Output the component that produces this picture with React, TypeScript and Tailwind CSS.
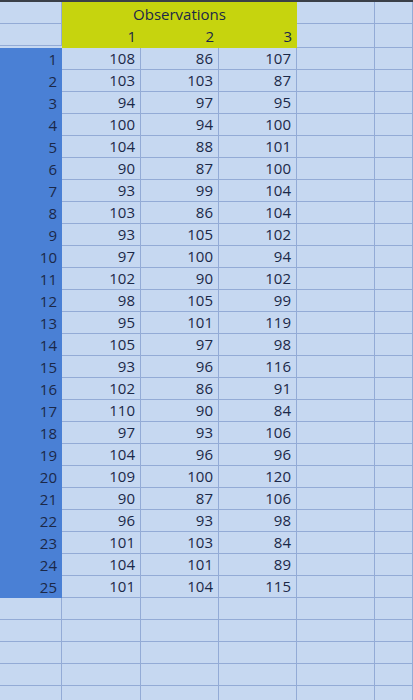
const data: number[][] = [
  [108, 86, 107],
  [103, 103, 87],
  [94, 97, 95],
  [100, 94, 100],
  [104, 88, 101],
  [90, 87, 100],
  [93, 99, 104],
  [103, 86, 104],
  [93, 105, 102],
  [97, 100, 94],
  [102, 90, 102],
  [98, 105, 99],
  [95, 101, 119],
  [105, 97, 98],
  [93, 96, 116],
  [102, 86, 91],
  [110, 90, 84],
  [97, 93, 106],
  [104, 96, 96],
  [109, 100, 120],
  [90, 87, 106],
  [96, 93, 98],
  [101, 103, 84],
  [104, 101, 89],
  [101, 104, 115],
];

const cell = "h-[22px] border-r border-b border-[#93abd6] bg-[#c6d8f1]";
const num = "flex items-center justify-end pr-[5px]";

export default function App() {
  return (
    <div
      className="w-[413px] h-[700px] overflow-hidden bg-[#c6d8f1] text-[#1b2848] text-[15px] font-medium"
      style={{ fontFamily: '"Open Sans", "Liberation Sans", sans-serif' }}
    >
      <div className="h-[2px] bg-[#3a3f48]" />
      <div className="grid grid-cols-[62px_79px_78px_78px_78px_1fr]">
        {/* header rows */}
        <div className={cell} />
        <div className="col-span-3 h-[22px] bg-[#c6d40e] flex items-center justify-center pt-[2px]">
          Observations
        </div>
        <div className={cell} />
        <div className={cell} />

        <div className={cell} />
        {[1, 2, 3].map((n) => (
          <div
            key={n}
            className="h-[24px] bg-[#c6d40e] flex items-center justify-end pr-[5px]"
          >
            {n}
          </div>
        ))}
        <div className={cell + " h-[24px]"} />
        <div className={cell + " h-[24px]"} />

        {/* data rows */}
        {data.map((row, i) => (
          <Row key={i} index={i + 1} values={row} />
        ))}

        {/* empty rows */}
        {Array.from({ length: 5 }).map((_, r) => (
          <EmptyRow key={r} />
        ))}
      </div>
    </div>
  );
}

function Row({ index, values }: { index: number; values: number[] }) {
  return (
    <>
      <div className="h-[22px] bg-[#4a80d5] flex items-center justify-end pr-[5px]">
        {index}
      </div>
      {values.map((v, j) => (
        <div key={j} className={cell + " " + num}>
          {v}
        </div>
      ))}
      <div className={cell} />
      <div className={cell} />
    </>
  );
}

function EmptyRow() {
  return (
    <>
      {Array.from({ length: 6 }).map((_, c) => (
        <div key={c} className={cell} />
      ))}
    </>
  );
}
